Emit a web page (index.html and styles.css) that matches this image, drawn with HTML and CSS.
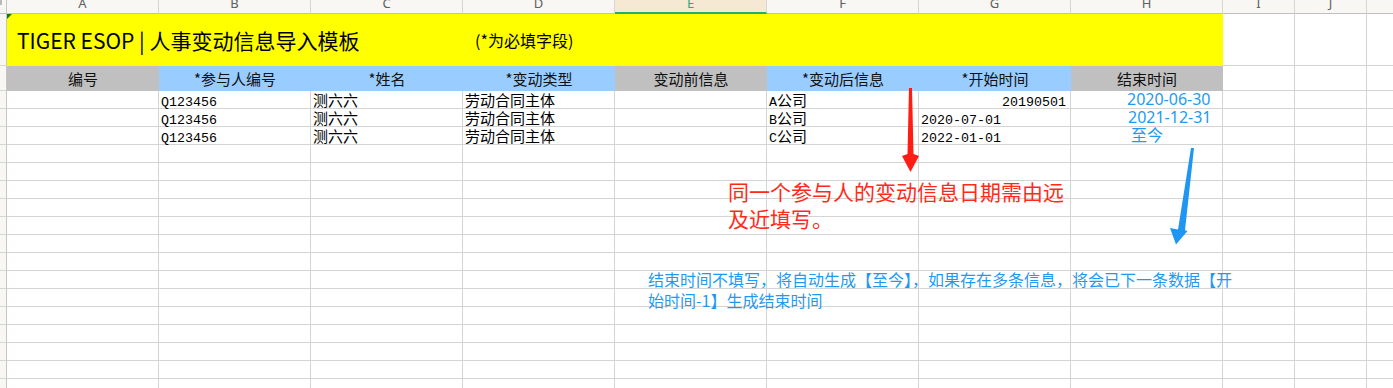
FILE: index.html
```html
<!DOCTYPE html>
<html lang="zh">
<head>
<meta charset="utf-8">
<title>TIGER ESOP | 人事变动信息导入模板</title>
<link rel="stylesheet" href="styles.css">
</head>
<body>
<div class="sheet">
  <div class="row colhead">
    <div class="rh corner"></div>
    <div class="ch">A</div><div class="ch">B</div><div class="ch">C</div><div class="ch">D</div>
    <div class="ch sel">E</div><div class="ch">F</div><div class="ch">G</div><div class="ch">H</div>
    <div class="ch">I</div><div class="ch">J</div><div class="ch last"></div>
  </div>
  <div class="row title-row">
    <div class="rh"></div>
    <div class="title"><span class="tmain">TIGER ESOP | 人事变动信息导入模板</span><span class="tnote">(*为必填字段)</span></div>
    <div class="c"></div><div class="c"></div><div class="c last"></div>
  </div>
  <div class="row head-row">
    <div class="rh"></div>
    <div class="h grey">编号</div>
    <div class="h blue">*参与人编号</div>
    <div class="h blue">*姓名</div>
    <div class="h blue">*变动类型</div>
    <div class="h grey">变动前信息</div>
    <div class="h blue">*变动后信息</div>
    <div class="h blue">*开始时间</div>
    <div class="h grey">结束时间</div>
    <div class="c"></div><div class="c"></div><div class="c last"></div>
  </div>
  <div class="row">
    <div class="rh"></div>
    <div class="c"></div>
    <div class="c t"><span class="m">Q123456</span></div>
    <div class="c t">测六六</div>
    <div class="c t">劳动合同主体</div>
    <div class="c"></div>
    <div class="c t"><span class="m">A</span>公司</div>
    <div class="c t num"><span class="m">20190501</span></div>
    <div class="c d">2020-06-30</div>
    <div class="c"></div><div class="c"></div><div class="c last"></div>
  </div>
  <div class="row">
    <div class="rh"></div>
    <div class="c"></div>
    <div class="c t"><span class="m">Q123456</span></div>
    <div class="c t">测六六</div>
    <div class="c t">劳动合同主体</div>
    <div class="c"></div>
    <div class="c t"><span class="m">B</span>公司</div>
    <div class="c t"><span class="m">2020-07-01</span></div>
    <div class="c d d2">2021-12-31</div>
    <div class="c"></div><div class="c"></div><div class="c last"></div>
  </div>
  <div class="row">
    <div class="rh"></div>
    <div class="c"></div>
    <div class="c t"><span class="m">Q123456</span></div>
    <div class="c t">测六六</div>
    <div class="c t">劳动合同主体</div>
    <div class="c"></div>
    <div class="c t"><span class="m">C</span>公司</div>
    <div class="c t"><span class="m">2022-01-01</span></div>
    <div class="c d d3">至今</div>
    <div class="c"></div><div class="c"></div><div class="c last"></div>
  </div>
  <div class="row"><div class="rh"></div><div class="c"></div><div class="c"></div><div class="c"></div><div class="c"></div><div class="c"></div><div class="c"></div><div class="c"></div><div class="c"></div><div class="c"></div><div class="c"></div><div class="c last"></div></div>
  <div class="row"><div class="rh"></div><div class="c"></div><div class="c"></div><div class="c"></div><div class="c"></div><div class="c"></div><div class="c"></div><div class="c"></div><div class="c"></div><div class="c"></div><div class="c"></div><div class="c last"></div></div>
  <div class="row"><div class="rh"></div><div class="c"></div><div class="c"></div><div class="c"></div><div class="c"></div><div class="c"></div><div class="c"></div><div class="c"></div><div class="c"></div><div class="c"></div><div class="c"></div><div class="c last"></div></div>
  <div class="row"><div class="rh"></div><div class="c"></div><div class="c"></div><div class="c"></div><div class="c"></div><div class="c"></div><div class="c"></div><div class="c"></div><div class="c"></div><div class="c"></div><div class="c"></div><div class="c last"></div></div>
  <div class="row"><div class="rh"></div><div class="c"></div><div class="c"></div><div class="c"></div><div class="c"></div><div class="c"></div><div class="c"></div><div class="c"></div><div class="c"></div><div class="c"></div><div class="c"></div><div class="c last"></div></div>
  <div class="row"><div class="rh"></div><div class="c"></div><div class="c"></div><div class="c"></div><div class="c"></div><div class="c"></div><div class="c"></div><div class="c"></div><div class="c"></div><div class="c"></div><div class="c"></div><div class="c last"></div></div>
  <div class="row"><div class="rh"></div><div class="c"></div><div class="c"></div><div class="c"></div><div class="c"></div><div class="c"></div><div class="c"></div><div class="c"></div><div class="c"></div><div class="c"></div><div class="c"></div><div class="c last"></div></div>
  <div class="row"><div class="rh"></div><div class="c"></div><div class="c"></div><div class="c"></div><div class="c"></div><div class="c"></div><div class="c"></div><div class="c"></div><div class="c"></div><div class="c"></div><div class="c"></div><div class="c last"></div></div>
  <div class="row"><div class="rh"></div><div class="c"></div><div class="c"></div><div class="c"></div><div class="c"></div><div class="c"></div><div class="c"></div><div class="c"></div><div class="c"></div><div class="c"></div><div class="c"></div><div class="c last"></div></div>
  <div class="row"><div class="rh"></div><div class="c"></div><div class="c"></div><div class="c"></div><div class="c"></div><div class="c"></div><div class="c"></div><div class="c"></div><div class="c"></div><div class="c"></div><div class="c"></div><div class="c last"></div></div>
  <div class="row"><div class="rh"></div><div class="c"></div><div class="c"></div><div class="c"></div><div class="c"></div><div class="c"></div><div class="c"></div><div class="c"></div><div class="c"></div><div class="c"></div><div class="c"></div><div class="c last"></div></div>
  <div class="row"><div class="rh"></div><div class="c"></div><div class="c"></div><div class="c"></div><div class="c"></div><div class="c"></div><div class="c"></div><div class="c"></div><div class="c"></div><div class="c"></div><div class="c"></div><div class="c last"></div></div>
  <div class="row"><div class="rh"></div><div class="c"></div><div class="c"></div><div class="c"></div><div class="c"></div><div class="c"></div><div class="c"></div><div class="c"></div><div class="c"></div><div class="c"></div><div class="c"></div><div class="c last"></div></div>
  <div class="row"><div class="rh"></div><div class="c"></div><div class="c"></div><div class="c"></div><div class="c"></div><div class="c"></div><div class="c"></div><div class="c"></div><div class="c"></div><div class="c"></div><div class="c"></div><div class="c last"></div></div>

  <svg class="arrow-red" width="22" height="88" viewBox="0 0 22 88"><polygon points="9,2 12,2 13.5,68 19,70 10.5,86 2,70 7.5,68" fill="#ff1c14"/></svg>
  <svg class="arrow-blue" width="32" height="104" viewBox="0 0 32 104"><polygon points="26,3 29,3 20,85.3 22.5,86 11,99.5 5,83 13,84.5" fill="#1f96f2"/></svg>
  <div class="note-red">同一个参与人的变动信息日期需由远及近填写。</div>
  <div class="note-blue">结束时间不填写，将自动生成【至今】，如果存在多条信息，将会已下一条数据【开始时间-1】生成结束时间</div>
</div>
</body>
</html>
```

FILE: styles.css
```css
html, body {
  margin: 0;
  padding: 0;
  background: #ffffff;
}
body {
  width: 1393px;
  height: 388px;
  overflow: hidden;
  font-family: "Noto Sans CJK SC", sans-serif;
  color: #000;
}
.sheet {
  position: relative;
  width: 1393px;
}
.row {
  display: grid;
  grid-template-columns: 7px repeat(8, 152px) 72px 72px 1fr;
  grid-template-rows: 100%;
  height: 18px;
}
.row > div {
  box-sizing: border-box;
  min-height: 0;
}
.rh {
  background: #f8f7f3;
  border-right: 1px solid #c6c6c6;
  border-bottom: 1px solid #d6d6d6;
}
.corner {
  border-bottom: 1px solid #c0c0c0;
  background: linear-gradient(to right, #b9b9b9 0 2px, #f8f7f3 2px);
  background-size: 100% 5px;
  background-repeat: no-repeat;
  background-color: #f8f7f3;
}
.colhead {
  height: 14px;
}
.ch {
  background: #f8f7f3;
  border-right: 1px solid #d6d6d6;
  border-bottom: 1px solid #c0c0c0;
  font-family: "Noto Sans", sans-serif;
  font-size: 13px;
  line-height: 6px;
  color: #606060;
  text-align: center;
  overflow: hidden;
}
.ch.sel {
  background: #f5e9d3;
  border-bottom: 2px solid #1fae74;
  color: #1fae74;
}
.ch.last,
.c.last {
  border-right: none;
}
.c {
  border-right: 1px solid #d4d4d4;
  border-bottom: 1px solid #d4d4d4;
  white-space: nowrap;
}
.title-row {
  height: 52px;
}
.title {
  grid-column: span 8;
  background: #ffff00;
  display: flex;
  align-items: center;
  padding-left: 10px;
  position: relative;
  white-space: nowrap;
}
.title::before {
  content: "";
  position: absolute;
  left: 0;
  top: 0;
  width: 0;
  height: 0;
  border-top: 5px solid #0b7a24;
  border-right: 5px solid transparent;
}
.tmain {
  display: inline-block;
  width: 458px;
  font-size: 21px;
  line-height: 30px;
}
.tnote {
  font-size: 16px;
  line-height: 20px;
}
.head-row {
  height: 25px;
}
.h {
  font-size: 15px;
  line-height: 25px;
  text-align: center;
  color: #111;
}
.h.grey {
  background: #c0c0c0;
}
.h.blue {
  background: #99ccff;
}
.t {
  font-size: 15px;
  line-height: 16px;
  padding-left: 2px;
  padding-top: 1px;
  color: #000;
}
.m {
  font-family: "Liberation Mono", monospace;
  font-size: 13.33px;
}
.t.num {
  text-align: right;
  padding-left: 0;
  padding-right: 4px;
}
.d {
  font-family: "Noto Sans", "Noto Sans CJK SC", sans-serif;
  font-size: 16px;
  line-height: 17px;
  color: #1f9af2;
  padding-left: 56px;
}
.d.d2 {
  padding-left: 57px;
}
.d.d3 {
  padding-left: 60px;
  line-height: 16px;
}
.arrow-red {
  position: absolute;
  left: 900px;
  top: 86px;
}
.arrow-blue {
  position: absolute;
  left: 1165px;
  top: 145px;
}
.note-red {
  position: absolute;
  left: 728px;
  top: 178px;
  width: 340px;
  font-size: 21px;
  line-height: 27px;
  color: #ff2a1a;
}
.note-blue {
  position: absolute;
  left: 648px;
  top: 269px;
  width: 590px;
  font-size: 16px;
  line-height: 21px;
  color: #1f9af2;
}
```
